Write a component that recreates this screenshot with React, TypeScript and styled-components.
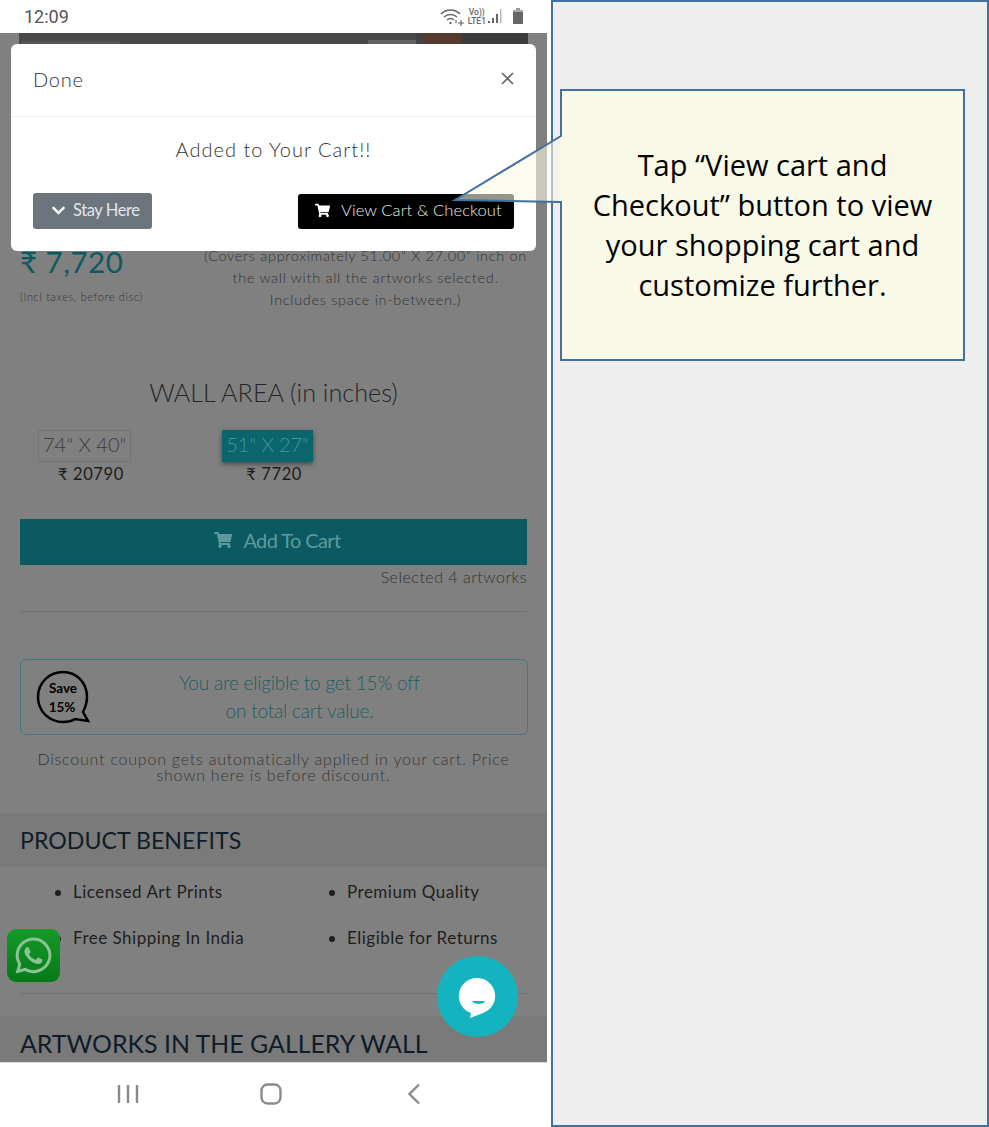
import { createGlobalStyle, styled } from "styled-components";
import { FaChevronDown, FaShoppingCart, FaWhatsapp } from "react-icons/fa";

const GlobalStyle = createGlobalStyle`
  html, body {
    margin: 0;
    padding: 0;
    background: #fff;
  }
  * {
    box-sizing: border-box;
  }
`;

const Screen = styled.div`
  position: relative;
  display: flex;
  width: 989px;
  height: 1127px;
  overflow: hidden;
  font-family: Lato, "Liberation Sans", "DejaVu Sans", sans-serif;
`;

const Phone = styled.div`
  position: relative;
  display: flex;
  flex-direction: column;
  width: 547px;
  height: 100%;
  flex: none;
`;

const StatusBar = styled.div`
  display: flex;
  align-items: center;
  justify-content: space-between;
  height: 33px;
  padding: 0 23px 0 24px;
  background: #fff;
  color: #555;
  font-family: Roboto, sans-serif;
  font-size: 18px;
`;

const StatusIcons = styled.div`
  display: flex;
  align-items: center;
  gap: 2px;
  color: #666;
`;

const NetworkLabel = styled.div`
  font-size: 8.5px;
  line-height: 8.5px;
  font-weight: 500;
  text-align: center;
`;

const Page = styled.main`
  flex: 1;
  min-height: 0;
  overflow: hidden;
  background: #808080;
`;

const HeroStrip = styled.div`
  height: 11px;
  margin: 0 19px;
  background:
    linear-gradient(#484848, #484848) 349px 0 / 48px 7px no-repeat,
    linear-gradient(#565656, #565656) 2px 8px / 99px 3px no-repeat,
    linear-gradient(
      90deg,
      #484848 0 68.6%,
      #626262 68.6% 78%,
      #424242 78% 79.6%,
      #553a2d 79.6% 87%,
      #3c3c3c 87%
    );
`;

const PriceRow = styled.div`
  display: flex;
  padding: 201px 20px 0 20px;
`;

const PriceColumn = styled.div`
  width: 180px;
  flex: none;
`;

const Price = styled.div`
  font-size: 29.5px;
  line-height: 34px;
  letter-spacing: 0.5px;
  color: #0a5a5f;
`;

const PriceNote = styled.div`
  margin-top: 11px;
  font-size: 11px;
  line-height: 14px;
  letter-spacing: 0.65px;
  font-weight: 300;
  color: #333;
`;

const CoverNote = styled.div`
  flex: 1;
  padding-left: 4px;
  font-size: 14.5px;
  line-height: 22px;
  letter-spacing: 0.68px;
  font-weight: 300;
  text-align: center;
  color: #333;
`;

const AreaTitle = styled.h2`
  margin: 66px 0 0 0;
  font-size: 25.2px;
  line-height: 30px;
  font-weight: 300;
  text-align: center;
  color: #262626;
`;

const AreaOptions = styled.div`
  display: flex;
  gap: 91px;
  margin-top: 23px;
  padding-left: 38px;
`;

const AreaOption = styled.div`
  display: flex;
  flex-direction: column;
  align-items: flex-start;
`;

const AreaChip = styled.div<{ $active?: boolean }>`
  height: 32px;
  padding: 0 ${(p) => (p.$active ? 3 : 4)}px;
  font-size: 20px;
  line-height: 27px;
  font-weight: 300;
  letter-spacing: ${(p) => (p.$active ? -0.1 : 0)}px;
  border: 1px solid ${(p) => (p.$active ? "#0b656d" : "#757575")};
  background: ${(p) => (p.$active ? "#0b656d" : "transparent")};
  color: ${(p) => (p.$active ? "#3f969c" : "#3c3c3c")};
  box-shadow: ${(p) => (p.$active ? "0 2px 5px rgba(0, 0, 0, 0.45)" : "none")};
`;

const AreaPrice = styled.div<{ $indent: number }>`
  margin: 1px 0 0 ${(p) => p.$indent}px;
  font-size: 16.5px;
  line-height: 22px;
  letter-spacing: 0.6px;
  color: #1c1c1c;
`;

const AddButton = styled.div`
  display: flex;
  align-items: center;
  justify-content: center;
  gap: 11px;
  height: 46px;
  margin: 34px 20px 0 20px;
  padding: 0 0 4px 8px;
  background: #0b5a62;
  color: #5d9a9e;
  font-size: 20px;
  letter-spacing: -0.6px;
`;

const SelectedNote = styled.div`
  margin: 2px 20px 0 20px;
  font-size: 16px;
  line-height: 20px;
  letter-spacing: 0.5px;
  font-weight: 300;
  text-align: right;
  color: #333;
`;

const Divider = styled.hr<{ $top: number; $bottom: number }>`
  height: 1px;
  margin: ${(p) => p.$top}px 20px ${(p) => p.$bottom}px 20px;
  border: 0;
  background: #727272;
`;

const OfferBox = styled.div`
  display: flex;
  align-items: center;
  height: 76px;
  margin: 0 19px 0 20px;
  padding-left: 15px;
  border: 1px solid #3e7a80;
  border-radius: 6px;
`;

const OfferText = styled.div`
  flex: 1;
  padding-right: 20px;
  font-size: 19px;
  line-height: 28px;
  font-weight: 300;
  letter-spacing: -0.2px;
  text-align: center;
  color: #1c5e62;
`;

const DiscountNote = styled.p`
  margin: 16px 20px 0 20px;
  font-size: 16px;
  line-height: 16px;
  letter-spacing: 0.78px;
  font-weight: 300;
  text-align: center;
  color: #363636;
`;

const SectionBand = styled.div<{ $top: number }>`
  display: flex;
  align-items: center;
  height: 54px;
  margin-top: ${(p) => p.$top}px;
  padding-left: 20px;
  background: #7a7a7a;
`;

const SectionTitle = styled.h3<{ $size: number }>`
  margin: 0;
  font-size: ${(p) => p.$size}px;
  line-height: 30px;
  font-weight: 400;
  color: #101c28;
`;

const Benefits = styled.ul`
  display: grid;
  grid-template-columns: 274px 1fr;
  row-gap: 23px;
  margin: 0;
  padding: 13px 0 0 73px;
`;

const Benefit = styled.li`
  font-size: 17px;
  line-height: 23px;
  letter-spacing: 0.5px;
  color: #1e1e1e;
`;

const NavBar = styled.nav`
  height: 65px;
  flex: none;
  background: #fff;
  border-top: 1px solid #dcdcdc;
`;

const NavIcons = styled.div`
  display: flex;
  align-items: center;
  gap: 121px;
  height: 62px;
  padding-left: 117px;
`;

const Modal = styled.section`
  position: absolute;
  top: 44px;
  left: 11px;
  display: flex;
  flex-direction: column;
  width: 525px;
  height: 207px;
  background: #fff;
  border-radius: 6px;
`;

const ModalHeader = styled.header`
  display: flex;
  align-items: center;
  justify-content: space-between;
  height: 73px;
  padding: 0 22px 2px 22px;
  border-bottom: 1px solid #efefef;
`;

const ModalTitle = styled.div`
  font-size: 20px;
  letter-spacing: 0.8px;
  font-weight: 300;
  color: #333;
`;

const CloseIcon = styled.svg`
  display: block;
  width: 13px;
  height: 13px;
  margin-top: -2px;
`;

const ModalMessage = styled.div`
  margin-top: 19px;
  font-size: 20px;
  line-height: 26px;
  letter-spacing: 1px;
  font-weight: 300;
  text-align: center;
  color: #333;
`;

const ModalActions = styled.div`
  display: flex;
  align-items: center;
  justify-content: space-between;
  margin-top: 31px;
  padding: 0 22px;
`;

const ModalButton = styled.div<{ $dark?: boolean }>`
  display: flex;
  align-items: center;
  height: ${(p) => (p.$dark ? 35 : 36)}px;
  width: ${(p) => (p.$dark ? 216 : 119)}px;
  padding: 0 0 2px ${(p) => (p.$dark ? 17 : 18)}px;
  gap: ${(p) => (p.$dark ? 11 : 7)}px;
  border-radius: 3px;
  background: ${(p) => (p.$dark ? "#000" : "#6c757d")};
  color: ${(p) => (p.$dark ? "#ececec" : "#e3e5e7")};
  font-size: 16.5px;
  letter-spacing: ${(p) => (p.$dark ? 0.1 : -0.4)}px;
  font-weight: ${(p) => (p.$dark ? 300 : 400)};
`;

const WhatsAppBadge = styled.div`
  position: absolute;
  top: 929px;
  left: 7px;
  display: flex;
  align-items: center;
  justify-content: center;
  width: 53px;
  height: 53px;
  border-radius: 9px;
  background: linear-gradient(180deg, #149a28, #07791a);
  color: #8cc294;
  font-size: 41px;
`;

const ChatButton = styled.div`
  position: absolute;
  top: 956px;
  left: 437px;
  width: 81px;
  height: 81px;
  border-radius: 50%;
  background: #13b4bf;
`;

const NotesPanel = styled.aside`
  width: 438px;
  height: 100%;
  margin-left: 4px;
  flex: none;
  background: #eeeeee;
  border: 2px solid #41719c;
`;

const Callout = styled.div`
  position: absolute;
  top: 89px;
  left: 449px;
  display: flex;
  justify-content: flex-end;
  width: 516px;
  height: 272px;
`;

const CalloutShape = styled.svg`
  position: absolute;
  top: 0;
  left: 0;
`;

const CalloutText = styled.div`
  position: relative;
  display: flex;
  align-items: center;
  justify-content: center;
  width: 405px;
  height: 272px;
  padding: 0 20px 1px 20px;
  font-family: "Open Sans", sans-serif;
  font-size: 29px;
  line-height: 40px;
  text-align: center;
  color: #000;
`;

function StatusGlyphs() {
  return (
    <StatusIcons>
      <svg width="26" height="20" viewBox="0 0 26 20" fill="none" stroke="#666" strokeWidth="1.5">
        <path d="M1 7C6 1.500 15 1.500 20 7" />
        <path d="M4 10c3.500-3.500 9.500-3.500 13 0" />
        <path d="M7 13c2-2 5-2 7 0" />
        <circle cx="10.500" cy="16" r="1.200" fill="#666" stroke="none" />
        <path d="M18 16h6M21 13v6M16 13v3" strokeWidth="1.200" />
      </svg>
      <NetworkLabel>
        Vo))
        <br />
        LTE1
      </NetworkLabel>
      <svg width="16" height="18" viewBox="0 0 16 18" fill="#666">
        <rect x="0" y="13" width="2" height="2" />
        <rect x="4" y="10" width="2" height="5" />
        <rect x="8" y="6" width="2" height="9" />
        <rect x="12" y="1" width="1.500" height="14" fill="#bbb" />
      </svg>
      <svg width="12" height="18" viewBox="0 0 12 18" fill="#666" style={{ marginLeft: 6 }}>
        <rect x="4" y="0" width="4" height="2" fill="#999" />
        <rect x="1" y="2" width="10" height="2" fill="#aaa" />
        <rect x="1" y="4" width="10" height="12" />
      </svg>
    </StatusIcons>
  );
}

function SaveBubble() {
  return (
    <svg width="56" height="54" viewBox="0 0 56 54">
      <path
        d="M27 2C14 2 2 12 2 27s12 25 25 25c5 0 9-1 12-3l13 2-5-9c2-4 4-9 4-15C51 12 40 2 27 2Z"
        fill="none"
        stroke="#000"
        strokeWidth="2.500"
      />
      <text x="27" y="23" textAnchor="middle" fontFamily="Lato, sans-serif" fontWeight="700" fontSize="13.500" fill="#000">
        Save
      </text>
      <text x="26" y="42" textAnchor="middle" fontFamily="Lato, sans-serif" fontWeight="700" fontSize="13.500" fill="#000">
        15%
      </text>
    </svg>
  );
}

export default function App() {
  return (
    <Screen>
      <GlobalStyle />
      <Phone>
        <StatusBar>
          <span>12:09</span>
          <StatusGlyphs />
        </StatusBar>
        <Page>
          <HeroStrip />
          <PriceRow>
            <PriceColumn>
              <Price>₹ 7,720</Price>
              <PriceNote>(Incl taxes, before disc)</PriceNote>
            </PriceColumn>
            <CoverNote>
              (Covers approximately 51.00" X 27.00" inch on
              <br />
              the wall with all the artworks selected.
              <br />
              Includes space in-between.)
            </CoverNote>
          </PriceRow>
          <AreaTitle>WALL AREA (in inches)</AreaTitle>
          <AreaOptions>
            <AreaOption>
              <AreaChip>74" X 40"</AreaChip>
              <AreaPrice $indent={20}>₹ 20790</AreaPrice>
            </AreaOption>
            <AreaOption>
              <AreaChip $active>51" X 27"</AreaChip>
              <AreaPrice $indent={24}>₹ 7720</AreaPrice>
            </AreaOption>
          </AreaOptions>
          <AddButton>
            <FaShoppingCart size={18} />
            Add To Cart
          </AddButton>
          <SelectedNote>Selected 4 artworks</SelectedNote>
          <Divider $top={24} $bottom={47} />
          <OfferBox>
            <SaveBubble />
            <OfferText>
              You are eligible to get 15% off
              <br />
              on total cart value.
            </OfferText>
          </OfferBox>
          <DiscountNote>
            Discount coupon gets automatically applied in your cart. Price shown here is before discount.
          </DiscountNote>
          <SectionBand $top={30}>
            <SectionTitle $size={23.2}>PRODUCT BENEFITS</SectionTitle>
          </SectionBand>
          <Benefits>
            <Benefit>Licensed Art Prints</Benefit>
            <Benefit>Premium Quality</Benefit>
            <Benefit>Free Shipping In India</Benefit>
            <Benefit>Eligible for Returns</Benefit>
          </Benefits>
          <Divider $top={44} $bottom={0} />
          <SectionBand $top={22}>
            <SectionTitle $size={24.9}>ARTWORKS IN THE GALLERY WALL</SectionTitle>
          </SectionBand>
        </Page>
        <NavBar>
          <NavIcons>
            <svg width="22" height="22" viewBox="0 0 22 22" stroke="#8a8a8a" strokeWidth="2.400" fill="none">
              <path d="M2 2v18M11 2v18M20 2v18" />
            </svg>
            <svg width="22" height="22" viewBox="0 0 22 22" stroke="#8a8a8a" strokeWidth="2.400" fill="none">
              <rect x="1.500" y="1.500" width="19" height="19" rx="6" />
            </svg>
            <svg width="14" height="22" viewBox="0 0 14 22" stroke="#8a8a8a" strokeWidth="2.400" fill="none" style={{ marginLeft: 4 }}>
              <path d="M12 1.500 2.500 11 12 20.500" />
            </svg>
          </NavIcons>
        </NavBar>
        <Modal>
          <ModalHeader>
            <ModalTitle>Done</ModalTitle>
            <CloseIcon viewBox="0 0 13 13" stroke="#666" strokeWidth="1.600" fill="none">
              <path d="M1 1l11 11M12 1 1 12" />
            </CloseIcon>
          </ModalHeader>
          <ModalMessage>Added to Your Cart!!</ModalMessage>
          <ModalActions>
            <ModalButton>
              <FaChevronDown size={15} color="#fff" />
              Stay Here
            </ModalButton>
            <ModalButton $dark>
              <FaShoppingCart size={15} color="#fff" />
              View Cart &amp; Checkout
            </ModalButton>
          </ModalActions>
        </Modal>
        <WhatsAppBadge>
          <FaWhatsapp />
        </WhatsAppBadge>
        <ChatButton>
          <svg width="81" height="81" viewBox="0 0 81 81">
            <path d="M41 22a18 18 0 0 1 5 35l-13 5 1-5a18 18 0 0 1 7-35Z" fill="#fff" />
            <path d="M35 45h13c-1 4-11 4-13 0Z" fill="#13b4bf" />
          </svg>
        </ChatButton>
      </Phone>
      <NotesPanel />
      <Callout>
        <CalloutShape width="516" height="272" viewBox="0 0 516 272">
          <path d="M112 47 6 111 112 113Z" fill="rgba(248, 249, 230, 0.6)" />
          <rect x="111" y="1" width="404" height="270" fill="#f8f9e7" />
          <path d="M112 47 6 111 112 113V271H515V1H112Z" fill="none" stroke="#41719c" strokeWidth="2" />
        </CalloutShape>
        <CalloutText>
          Tap “View cart and Checkout” button to view your shopping cart and customize further.
        </CalloutText>
      </Callout>
    </Screen>
  );
}
